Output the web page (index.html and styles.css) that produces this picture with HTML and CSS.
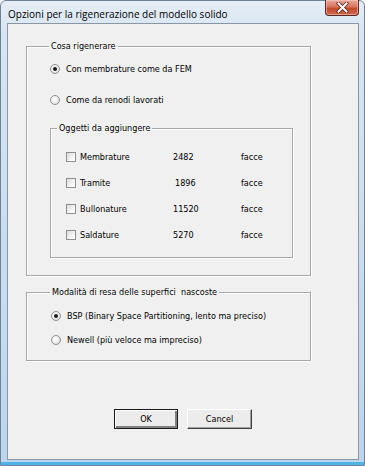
FILE: index.html
```html
<!DOCTYPE html>
<html lang="it">
<head>
<meta charset="utf-8">
<title>Opzioni per la rigenerazione del modello solido</title>
<link rel="stylesheet" href="styles.css">
</head>
<body>
<div class="window">
  <div class="titlebar">
    <span class="title">Opzioni per la rigenerazione del modello solido</span>
    <button class="close" aria-label="Chiudi">
      <svg width="13" height="11" viewBox="0 0 13 11"><path d="M2.5 1.5 L10.5 9.5 M10.5 1.5 L2.5 9.5" stroke="#5a2418" stroke-width="3.6" stroke-linecap="square"/><path d="M2.5 1.5 L10.5 9.5 M10.5 1.5 L2.5 9.5" stroke="#ffffff" stroke-width="2" stroke-linecap="square"/></svg>
    </button>
  </div>
  <div class="client">
    <fieldset class="group g1">
      <legend>Cosa rigenerare</legend>
      <label class="opt first"><span class="radio on"></span>Con membrature come da FEM</label>
      <label class="opt second"><span class="radio"></span>Come da renodi lavorati</label>
      <fieldset class="group inner">
        <legend>Oggetti da aggiungere</legend>
        <div class="items">
          <label class="item"><span class="check"></span><span class="name">Membrature</span><span class="num">2482</span><span class="unit">facce</span></label>
          <label class="item"><span class="check"></span><span class="name">Tramite</span><span class="num shift">1896</span><span class="unit">facce</span></label>
          <label class="item"><span class="check"></span><span class="name">Bullonature</span><span class="num">11520</span><span class="unit">facce</span></label>
          <label class="item last"><span class="check"></span><span class="name">Saldature</span><span class="num">5270</span><span class="unit">facce</span></label>
        </div>
      </fieldset>
    </fieldset>
    <fieldset class="group g2">
      <legend>Modalità di resa delle superfici&nbsp; nascoste</legend>
      <label class="opt first"><span class="radio on"></span>BSP (Binary Space Partitioning, lento ma preciso)</label>
      <label class="opt second"><span class="radio"></span>Newell (più veloce ma impreciso)</label>
    </fieldset>
    <div class="buttons">
      <button class="btn default">OK</button>
      <button class="btn">Cancel</button>
    </div>
  </div>
</div>
</body>
</html>
```
FILE: styles.css
```css
html, body {
  margin: 0;
  padding: 0;
  background: #ffffff;
}

.window {
  box-sizing: border-box;
  width: 365px;
  height: 466px;
  border: 1px solid #6f8397;
  border-radius: 6px 6px 0 0;
  background: linear-gradient(180deg, #e6eef7 0px, #d8e5f2 30px, #c6dbef 300px, #bcd5ed 100%);
  display: flex;
  flex-direction: column;
  box-shadow: inset 0 -3px 0 #4fb3e6;
}

.titlebar {
  height: 22px;
  display: flex;
  justify-content: space-between;
  align-items: flex-start;
  padding-left: 7px;
}

.title {
  font-family: "Open Sans", "Noto Sans", sans-serif;
  font-size: 10px;
  line-height: 14px;
  color: #000000;
  padding-top: 6px;
}

.close {
  box-sizing: border-box;
  width: 34px;
  height: 16px;
  margin: -1px 5px 0 0;
  padding: 0;
  border: 1px solid #5b2a21;
  border-top: none;
  border-radius: 0 0 4px 4px;
  background: linear-gradient(180deg, #e9a99b 0%, #d7745f 45%, #c24a2f 55%, #cf6a4a 100%);
  display: flex;
  align-items: center;
  justify-content: center;
  box-shadow: inset 0 0 0 1px rgba(255, 210, 200, 0.5);
}

.client {
  flex: 1;
  margin: 0 5px 5px 6px;
  border: 1px solid #8896a5;
  background: #f0f0f0;
  padding: 16px 0 0 18px;
  font-family: "DejaVu Sans Condensed", "DejaVu Sans", sans-serif;
  font-size: 9px;
  line-height: 12px;
  color: #000000;
}

.group {
  margin: 0;
  min-width: 0;
  border: 1px solid #a7a7a7;
  box-shadow: 1px 1px 0 #ffffff, inset 1px 1px 0 #ffffff;
}

.group legend {
  padding: 0 2px;
  margin-left: -1px;
  line-height: 12px;
}

.g1 {
  width: 285px;
  box-sizing: border-box;
  padding: 11px 17px 17px 23px;
}

.g2 {
  width: 285px;
  box-sizing: border-box;
  margin-top: 10px;
  padding: 12px 17px 14px 24px;
}

.opt {
  display: flex;
  align-items: center;
  height: 12px;
  white-space: nowrap;
}

.opt.second {
  margin-top: 19px;
}

.g2 .opt.second {
  margin-top: 12px;
}

.radio {
  box-sizing: border-box;
  width: 10px;
  height: 10px;
  border-radius: 50%;
  border: 1px solid #8e8f8f;
  background: radial-gradient(circle at 40% 40%, #ffffff 0%, #f0f0f0 45%, #cfcfcf 100%);
  margin-right: 6px;
  flex: none;
  display: flex;
  align-items: center;
  justify-content: center;
}

.radio.on::after {
  content: "";
  width: 4px;
  height: 4px;
  border-radius: 50%;
  background: #1a1a1a;
}

.inner {
  width: 243px;
  box-sizing: border-box;
  margin-top: 16px;
  padding: 17px 10px 16px 15px;
}

.inner legend {
  margin-left: -9px;
}

.item {
  display: flex;
  align-items: center;
  height: 12px;
  margin-bottom: 14px;
  white-space: nowrap;
}

.item.last {
  margin-bottom: 0;
}

.check {
  box-sizing: border-box;
  width: 10px;
  height: 10px;
  border: 1px solid #8e8f8f;
  background: linear-gradient(135deg, #dcdcdc 0%, #f4f4f4 60%, #ffffff 100%);
  margin-right: 4px;
  flex: none;
}

.name {
  width: 93px;
}

.num {
  width: 68px;
}

.num.shift {
  padding-left: 2px;
  width: 66px;
}

.buttons {
  display: flex;
  justify-content: center;
  gap: 9px;
  margin: 48px 0 0 -18px;
}

.btn {
  box-sizing: border-box;
  width: 64px;
  height: 20px;
  padding: 0;
  font-family: "DejaVu Sans Condensed", "DejaVu Sans", sans-serif;
  font-size: 9px;
  color: #000000;
  background: #ececec;
  border: 1px solid;
  border-color: #ffffff #404040 #404040 #ffffff;
  box-shadow: inset -1px -1px 0 #a0a0a0;
}

.btn.default {
  outline: 1px solid #1a1a1a;
  outline-offset: -1px;
  border-color: #1a1a1a;
  box-shadow: inset 1px 1px 0 #ffffff, inset -2px -2px 0 #808080;
}

.btn + .btn {
  width: 65px;
}
```
